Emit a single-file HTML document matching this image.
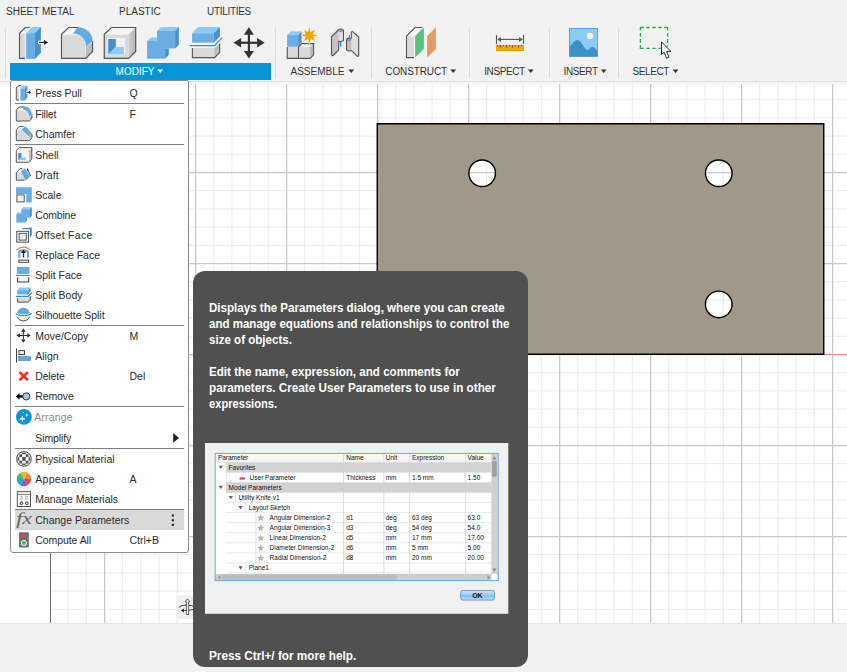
<!DOCTYPE html>
<html>
<head>
<meta charset="utf-8">
<title>Fusion 360 - Modify menu</title>
<style>
html,body{margin:0;padding:0;}
body{width:847px;height:672px;overflow:hidden;background:#f2f2f2;font-family:"Liberation Sans",sans-serif;font-size:11px;color:#2b2b2b;position:relative;}
.abs{position:absolute;}
#toolbar{left:0;top:0;width:847px;height:81px;background:#f2f2f2;border-bottom:1px solid #e0e0e0;}
.tab{position:absolute;top:5px;font-size:10px;color:#333;white-space:nowrap;line-height:13px;}
.vsep{position:absolute;top:27px;width:1px;height:50.5px;background:#dcdcdc;}
.glabel{position:absolute;top:65px;font-size:10px;color:#333;white-space:nowrap;line-height:13px;}
.dd{position:absolute;top:69.4px;width:5.8px;height:3.5px;background:#333;clip-path:polygon(0 0,100% 0,50% 100%);}
#modbar{left:10px;top:63px;width:261px;height:17px;background:#0696d7;}
#canvas{left:0;top:82px;width:847px;height:541px;background:#fff;overflow:hidden;}
#menu{left:10px;top:80px;width:177px;height:471px;background:#fff;border:1px solid #8c8c8c;border-radius:2px 2px 3px 3px;}
.mi{position:absolute;left:24.25px;margin-top:1px;font-size:10.5px;line-height:13px;color:#2b2b2b;white-space:nowrap;letter-spacing:0;}
.sc{position:absolute;left:118.5px;margin-top:1px;font-size:10.5px;line-height:13px;color:#2b2b2b;white-space:nowrap;}
.msep{position:absolute;left:4px;width:169px;height:1px;background:#7f7f7f;}
#tip{left:193px;top:271px;width:335px;height:396px;background:#505050;border-radius:12px;}
.tt{position:absolute;left:16.1px;color:#fff;font-weight:bold;font-size:12.5px;line-height:16px;white-space:nowrap;transform-origin:0 0;transform:scaleX(0.92);}
</style>
</head>
<body>
<!-- TOOLBAR -->
<div id="toolbar" class="abs">
  <div class="tab" style="left:6px">SHEET METAL</div>
  <div class="tab" style="left:119px">PLASTIC</div>
  <div class="tab" style="left:207px;letter-spacing:-0.3px">UTILITIES</div>
  <div class="vsep" style="left:5px"></div>
  <div class="vsep" style="left:275px"></div>
  <div class="vsep" style="left:371px"></div>
  <div class="vsep" style="left:469px"></div>
  <div class="vsep" style="left:549px"></div>
  <div class="vsep" style="left:618px"></div>
  <div id="modbar" class="abs"></div>
  <div class="glabel" style="left:115.6px;color:#fff">MODIFY</div><i class="dd" style="left:157.3px;background:#fff"></i>
  <div class="glabel" style="left:290.5px">ASSEMBLE</div><i class="dd" style="left:348.4px"></i>
  <div class="glabel" style="left:385.3px;letter-spacing:-0.12px">CONSTRUCT</div><i class="dd" style="left:450.3px"></i>
  <div class="glabel" style="left:484.2px;letter-spacing:-0.4px">INSPECT</div><i class="dd" style="left:527.9px"></i>
  <div class="glabel" style="left:563.5px;letter-spacing:-0.38px">INSERT</div><i class="dd" style="left:600.8px"></i>
  <div class="glabel" style="left:632.4px;letter-spacing:-0.37px">SELECT</div><i class="dd" style="left:672.7px"></i>
  <svg class="abs" style="left:0;top:0" width="847" height="82" viewBox="0 0 847 82">
    <defs>
      <linearGradient id="gr" x1="0" y1="0" x2="1" y2="0"><stop offset="0" stop-color="#cfcfcf"/><stop offset="1" stop-color="#b5b5b5"/></linearGradient>
      <!-- press pull 32px, origin at (14,22) -->
      <g id="ic-press">
        <path d="M25.2 27.6 L19.7 33.3 V58.2 H25.2 V33.3 L29.9 27.6 Z" fill="#f6f6f6"/>
        <rect x="20" y="33.5" width="5.2" height="24.6" fill="#dadada"/>
        <path d="M29.9 27.5 H25.25 L19.5 33.25 V58.4 H24.9" fill="none" stroke="#555" stroke-width="1.1"/>
        <path d="M25.6 33 L31.8 26.6 H41.4 V52.8 L35.1 59.4 H25.6 Z" fill="#fbf3ee"/>
        <path d="M26.2 33.25 L32.1 27.1 H40.9 L34.9 33.25 Z" fill="#8ccbf8"/>
        <rect x="26.2" y="33.25" width="8.7" height="25.65" fill="#6aade4"/>
        <path d="M34.9 33.25 L40.9 27.1 V52.6 L34.9 58.9 Z" fill="#4592cf"/>
        <rect x="38" y="40.6" width="7" height="3.6" fill="#fbf5f0"/>
        <path d="M39 42.4 H45.4" stroke="#222" stroke-width="1.2"/>
        <path d="M44 40.1 L48.2 42.4 L44 44.7 Z" fill="#222"/>
      </g>
      <g id="ic-fillet">
        <path d="M61.5 34.5 L68.5 27.5 H77.9 L72.9 33.6 Z" fill="#f8f8f8"/>
        <path d="M62 35 H74.75 A10.6 11.9 0 0 1 85.2 47 V58 H62 Z" fill="#dadada"/>
        <path d="M86 47.3 L92.6 42 V51.4 L85.7 58 Z" fill="#bcbcbc"/>
        <path d="M77.9 27.3 A14.7 13.5 0 0 1 92.6 40.75 L86 47 A13.1 13.4 0 0 0 72.9 33.6 Z" fill="#62abe3"/>
        <path d="M77.9 27.5 H68.5 L61.5 34.5 V58.4 H85.7 L92.6 51.4 V41" fill="none" stroke="#555" stroke-width="1.1"/>
      </g>
      <g id="ic-shell">
        <path d="M104.25 34.5 L111.4 27.5 H135.7 L128.6 34.8 Z" fill="#f3f3f3"/>
        <rect x="104.25" y="34.8" width="24.2" height="23.6" fill="#d8d8d8"/>
        <path d="M128.4 34.8 L135.7 27.5 V51.4 L128.6 58.4 Z" fill="url(#gr)"/>
        <rect x="107.1" y="37.9" width="18.1" height="17.2" fill="#f1f1f1"/>
        <path d="M108.2 39 H115.9 V47 L108.2 54.6 Z" fill="#4592cf"/>
        <path d="M115.9 47 H123.9 V54.6 H108.2 Z" fill="#8ccbf8"/>
        <path d="M104.25 34.5 L111.4 27.5 H135.7 V51.4 L128.6 58.4 H104.25 Z" fill="none" stroke="#555" stroke-width="1.2"/>
      </g>
      <g id="ic-combine">
        <path d="M146.6 41 L150.8 36.7 H156.6 V31 L160.8 26.6 H179.3 V45 L175.3 49.1 H169.3 V55 L165.3 59.25 H146.6 Z" fill="#fbf3ee"/>
        <path d="M147.1 41.1 H157.1 V31.1 H175.1 V48.6 H165.1 V58.75 H147.1 Z" fill="#6aade4"/>
        <path d="M157.1 31.1 L161 27.1 H178.8 L175.1 31.1 Z" fill="#8ccbf8"/>
        <path d="M147.1 41.1 L151 37.2 H157.1 V41.1 Z" fill="#8ccbf8"/>
        <path d="M175.1 31.1 L178.8 27.1 V44.8 L175.1 48.6 Z" fill="#4592cf"/>
        <path d="M165.1 48.6 H168.8 V54.8 L165.1 58.75 Z" fill="#4592cf"/>
      </g>
      <g id="ic-splitbody">
        <path d="M191.6 33 L197.9 26.6 H220.4 V36.7 L214 43.1 H191.6 Z" fill="#fbf3ee"/>
        <path d="M192.1 33.25 L198.1 27.1 H219.9 L213.7 33.25 Z" fill="#8ccbf8"/>
        <rect x="192.1" y="33.25" width="21.6" height="9.35" fill="#6aade4"/>
        <path d="M213.7 33.25 L219.9 27.1 V36.5 L213.7 42.6 Z" fill="#4592cf"/>
        <rect x="192.4" y="47.9" width="21.9" height="9.7" fill="#dadada"/>
        <path d="M214.3 47.9 L219.6 43.25 V52.6 L214.3 57.6 Z" fill="#bcbcbc"/>
        <path d="M192.4 47.9 V57.6 H214.6 L219.6 52.6 V43.5" fill="none" stroke="#555" stroke-width="1.1"/>
        <path d="M189.9 45.6 H214.6 L221.9 37.9" fill="none" stroke="#fcf6f1" stroke-width="3.6"/>
        <path d="M189.9 45.6 H214.6 L221.9 37.9" fill="none" stroke="#2b8ce6" stroke-width="1.2"/>
      </g>
      <g id="ic-move" fill="#333">
        <rect x="247.8" y="33" width="2.2" height="20"/>
        <rect x="239" y="41.65" width="20" height="2.2"/>
        <path d="M248.9 27.3 L253.9 34.8 H243.9 Z"/>
        <path d="M248.9 58.4 L253.9 51.1 H243.9 Z"/>
        <path d="M233.5 42.75 L241.1 38.1 V47.6 Z"/>
        <path d="M264.6 42.75 L257.1 38.1 V47.6 Z"/>
      </g>
    </defs>
    <use href="#ic-press"/><use href="#ic-fillet"/><use href="#ic-shell"/><use href="#ic-combine"/><use href="#ic-splitbody"/><use href="#ic-move"/>
    <!-- new component -->
    <g>
      <path d="M286.6 35 L290.8 30.75 H302.1 V42.8 L298.4 47 H286.6 Z" fill="#fbf3ee"/>
      <rect x="287.25" y="47" width="11.2" height="11.3" fill="#dadada"/>
      <rect x="298.6" y="47" width="11.5" height="11.3" fill="#dadada"/>
      <path d="M298.6 47 L302 43.6 H313.5 L310.1 47 Z" fill="#f6f6f6"/>
      <path d="M310.1 47 L313.5 43.6 V54.8 L310.1 58.25 Z" fill="#bcbcbc"/>
      <path d="M287.25 47 V58.4 H310.1 L313.6 54.8 V43.6 H302 L298.5 47 V58.4" fill="none" stroke="#555" stroke-width="1.1"/>
      <rect x="287.1" y="35.1" width="11.1" height="11.6" fill="#6aade4"/>
      <path d="M287.1 35.1 L291 31.25 H301.6 L298.2 35.1 Z" fill="#8ccbf8"/>
      <path d="M298.2 35.1 L301.6 31.4 V42.6 L298.2 46.7 Z" fill="#4592cf"/>
      <path id="star" d="M309.4 26.9 L310.6 31.9 L314.9 29.9 L312.9 34.2 L317.9 35.4 L312.9 36.6 L314.9 40.9 L310.6 38.9 L309.4 43.9 L308.2 38.9 L303.9 40.9 L305.9 36.6 L300.9 35.4 L305.9 34.2 L303.9 29.9 L308.2 31.9 Z" fill="#f6a500" stroke="#f4f0ea" stroke-width="0.8" paint-order="stroke"/>
    </g>
    <!-- joint -->
    <g stroke-linejoin="round">
      <defs><linearGradient id="cyl" x1="0" y1="0" x2="1" y2="0"><stop offset="0" stop-color="#c8c8c8"/><stop offset="0.5" stop-color="#e6e6e6"/><stop offset="1" stop-color="#d2d2d2"/></linearGradient></defs>
      <path d="M331.5 36.7 L338.4 30 V50.4 L332.75 55.75 L331.5 55.1 Z" fill="#c3c3c3"/>
      <path d="M338.3 30.2 C338.6 28.7 343.5 28.6 343.5 30.75 V40 C343.5 41.3 340.5 41.7 338.7 41.4 Z" fill="url(#cyl)"/>
      <ellipse cx="340.9" cy="30.7" rx="2" ry="0.9" fill="#c6c6c6" stroke="#6a6a6a" stroke-width="0.6"/>
      <path d="M331.5 36.7 L338.3 30 C339.3 28.6 343.5 28.5 343.5 30.75 V40 C343.5 41.3 340.8 41.7 338.7 41.4 V50.1 L332.75 55.75 L331.5 55.1 Z" fill="none" stroke="#555" stroke-width="1.1"/>
      <path d="M351.3 38.5 V32.3 L352.4 31.4 L358.7 37 V55.75 L357.4 56.4 L351.4 50.5 Z" fill="#dedede"/>
      <path d="M346.5 40 C346.5 38.3 350.2 38.1 351.4 38.7 V50.5 C350 51.2 346.5 51 346.5 49.6 Z" fill="#bfbfbf"/>
      <ellipse cx="349" cy="39.8" rx="2.1" ry="1" fill="#e2e2e2" stroke="#666" stroke-width="0.6"/>
      <path d="M351.3 38.6 V32.3 L352.4 31.4 L358.7 37 V55.75 L357.4 56.4 L351.5 50.6 C350 51.2 346.5 51 346.5 49.6 V40 C346.5 38.2 350 38 351.3 38.6" fill="none" stroke="#555" stroke-width="1.1"/>
      <path d="M340.6 42 V46.7 M349.3 35.1 V40.4" stroke="#1e90ff" stroke-width="1.3" fill="none"/>
    </g>
    <!-- construct -->
    <g>
      <path d="M415.1 27.6 L406.8 36.1 V57.4 H414 V36.1 L422 27.6 Z" fill="#f7f7f7"/>
      <rect x="407.1" y="36.4" width="6.9" height="20.9" fill="#dadada"/>
      <path d="M422.1 27.5 H415.1 L406.5 36.1 V57.6 H414" fill="none" stroke="#555" stroke-width="1.1"/>
      <path d="M415.1 36.1 L423.9 27.3 V48.9 L415.1 57.6 Z" fill="#57c47e" stroke="#f4faf6" stroke-width="0.8" paint-order="stroke"/>
      <path d="M427.1 36.1 L435.9 27.3 V48.9 L427.1 57.6 Z" fill="#e59a62" stroke="#f6f2ee" stroke-width="0.8" paint-order="stroke"/>
    </g>
    <!-- inspect -->
    <g>
      <rect x="495.4" y="44.5" width="29.1" height="6.9" fill="#f4f6fb"/>
      <rect x="495.9" y="45" width="28.1" height="5.9" fill="#f7a700"/>
      <rect x="495.9" y="50" width="28.1" height="0.9" fill="#e89800"/>
      <path d="M497.4 45 V46.4 M503.5 45 V46.4 M509.5 45 V46.4 M515.4 45 V46.4 M521.5 45 V46.4 M500.4 45 V47.75 M506.5 45 V47.75 M512.4 45 V47.75 M518.5 45 V47.75" stroke="#5a5040" stroke-width="0.9"/>
      <path d="M496.5 35 V43.9 M523.5 35 V43.9" stroke="#555" stroke-width="1.1"/>
      <path d="M499 39.4 H521" stroke="#555" stroke-width="1.1"/>
      <path d="M497.4 39.4 L500.9 37 V41.9 Z M522.75 39.4 L519.1 37 V41.9 Z" fill="#555"/>
    </g>
    <!-- insert -->
    <g>
      <rect x="568.4" y="27.4" width="30.2" height="30" fill="#faf4f0"/>
      <rect x="569.4" y="28.4" width="28.2" height="28" fill="#8ccbf8" stroke="#2f8ad2" stroke-width="0.7"/>
      <path d="M569.6 47 C573 43 575 40.1 577.7 40.1 C581.5 40.1 584 50.1 587.7 50.1 C589.5 50.1 590.5 46.7 592.4 46.7 C594.5 46.7 596 49.5 597.4 51.4 V56.2 H569.6 Z" fill="#3f8fca"/>
      <circle cx="590" cy="35.9" r="3.1" fill="#ffffc4"/>
    </g>
    <!-- select -->
    <g>
      <g fill="none" stroke="#1dae4c" stroke-width="1.3">
        <path d="M640.4 27.5 H667.6" stroke-dasharray="3.4 2.55"/>
        <path d="M640.4 48.4 H660.5" stroke-dasharray="3.4 2.55"/>
        <path d="M640.4 26.9 V49" stroke-dasharray="3.7 2.4"/>
        <path d="M667.6 26.9 V46.5" stroke-dasharray="3.7 2.4"/>
      </g>
      <path d="M661.5 41.9 V54.5 L664.2 52.2 L666.5 58.25 L669 57.3 L666.6 51.4 H670.9 Z" fill="#fff" stroke="#222" stroke-width="1" stroke-linejoin="miter"/>
    </g>
  </svg>
</div>

<!-- CANVAS -->
<div id="canvas" class="abs">
<svg width="847" height="541" viewBox="0 82 847 541" style="position:absolute;left:0;top:0">
  <defs>
    <pattern id="minor" x="377" y="354" width="18.2" height="18.2" patternUnits="userSpaceOnUse">
      <path d="M0.5 0V18.2M0 0.5H18.2" stroke="#eaeaea" stroke-width="1" fill="none"/>
    </pattern>
    <pattern id="major" x="377" y="354" width="91" height="91" patternUnits="userSpaceOnUse">
      <path d="M0.65 0V91M0 0.7H91" stroke="#c9c9c9" stroke-width="1.3" fill="none"/>
    </pattern>
  </defs>
  <rect x="50" y="82" width="797" height="541" fill="url(#minor)"/>
  <rect x="50" y="82" width="797" height="541" fill="url(#major)"/>
  <rect x="0" y="82" width="847" height="2" fill="#f4f4f4"/>
  <rect x="0" y="81" width="847" height="1" fill="#dedede"/>
  <rect x="50" y="84" width="1" height="539" fill="#6e6e6e"/>

  <rect x="377" y="84" width="1" height="40" fill="#7dfa7d"/>
  <rect x="824" y="354" width="23" height="1" fill="#ff8080"/>
  <path d="M377.25 123.75 H823.75 V354.25 H377.25 Z M468.85 173.25 a13.30 13.30 0 1 0 26.60 0 a13.30 13.30 0 1 0 -26.60 0 Z M705.45 173.25 a13.30 13.30 0 1 0 26.60 0 a13.30 13.30 0 1 0 -26.60 0 Z M705.45 304.45 a13.30 13.30 0 1 0 26.60 0 a13.30 13.30 0 1 0 -26.60 0 Z" fill="#a09888" fill-rule="evenodd" stroke="#000" stroke-width="1.4"/>
  <rect x="176.4" y="595.1" width="30" height="24.1" rx="1.5" fill="#f0f0f0"/>
  <path d="M179.2 607.6 C179.5 604.5 192 604.5 195 607 C197 609.5 190 610.4 183.5 610.4" fill="none" stroke="#222" stroke-width="0.9"/>
  <path d="M180.9 610.4 L183.8 608.4 V612.5 Z" fill="#111"/>
  <path d="M187.45 598.9 L190 601.7 H188.6 V614.5 H186.4 V601.7 H185 Z" fill="#fff" stroke="#334" stroke-width="0.8"/>
</svg>
</div>

<div class="abs" style="left:0;top:623px;width:847px;height:1px;background:#e6e6e6"></div>
<!-- MENU -->
<div id="menu" class="abs"><div class="abs" style="left:0;top:1px">
  <div class="abs" style="left:4px;top:428px;width:169px;height:20px;background:#d9d9d9"></div>
  <div class="msep" style="top:21px"></div>
  <div class="msep" style="top:62px"></div>
  <div class="msep" style="top:243px"></div>
  <div class="msep" style="top:324px"></div>
  <div class="msep" style="top:366px"></div>
  <div class="msep" style="top:427px"></div>
  <div class="mi" style="top:4px;color:#2b2b2b;letter-spacing:-0.08px">Press Pull</div>
  <div class="sc" style="top:4px">Q</div>
  <div class="mi" style="top:25px;color:#2b2b2b;letter-spacing:-0.2px">Fillet</div>
  <div class="sc" style="top:25px">F</div>
  <div class="mi" style="top:45px;color:#2b2b2b">Chamfer</div>
  <div class="mi" style="top:66px;color:#2b2b2b">Shell</div>
  <div class="mi" style="top:86px;color:#2b2b2b;letter-spacing:0.19px">Draft</div>
  <div class="mi" style="top:106px;color:#2b2b2b">Scale</div>
  <div class="mi" style="top:126px;color:#2b2b2b;letter-spacing:-0.2px">Combine</div>
  <div class="mi" style="top:146px;color:#2b2b2b;letter-spacing:0.3px">Offset Face</div>
  <div class="mi" style="top:166px;color:#2b2b2b">Replace Face</div>
  <div class="mi" style="top:186px;color:#2b2b2b">Split Face</div>
  <div class="mi" style="top:206px;color:#2b2b2b">Split Body</div>
  <div class="mi" style="top:226px;color:#2b2b2b;letter-spacing:-0.05px">Silhouette Split</div>
  <div class="mi" style="top:247px;color:#2b2b2b">Move/Copy</div>
  <div class="sc" style="top:247px">M</div>
  <div class="mi" style="top:267px;color:#2b2b2b">Align</div>
  <div class="mi" style="top:287px;color:#2b2b2b;letter-spacing:-0.15px">Delete</div>
  <div class="sc" style="top:287px">Del</div>
  <div class="mi" style="top:307px;color:#2b2b2b;letter-spacing:-0.12px">Remove</div>
  <div class="mi" style="top:328px;color:#8a8a8a;letter-spacing:0.17px;margin-left:-1px">Arrange</div>
  <div class="mi" style="top:349px;color:#2b2b2b;letter-spacing:-0.1px">Simplify</div>
  <div class="mi" style="top:370px;color:#2b2b2b">Physical Material</div>
  <div class="mi" style="top:390px;color:#2b2b2b;letter-spacing:0.28px">Appearance</div>
  <div class="sc" style="top:390px">A</div>
  <div class="mi" style="top:410px;color:#2b2b2b;letter-spacing:-0.05px">Manage Materials</div>
  <div class="mi" style="top:431px;color:#2b2b2b">Change Parameters</div>
  <div class="mi" style="top:451px;color:#2b2b2b;letter-spacing:-0.07px">Compute All</div>
  <div class="sc" style="top:451px">Ctrl+B</div>
  <svg class="abs" style="left:-11px;top:-82px" width="200" height="560" viewBox="0 0 200 560">
    <defs>
      <clipPath id="cpm"><circle cx="23.95" cy="458.9" r="7.5"/></clipPath>
      <pattern id="chk" x="22" y="457.1" width="7.6" height="7.6" patternUnits="userSpaceOnUse">
        <rect x="0" y="0" width="3.8" height="3.8" fill="#555"/><rect x="3.8" y="3.8" width="3.8" height="3.8" fill="#555"/>
      </pattern>
    </defs>
    <!-- press pull -->
    <rect x="16.6" y="88.7" width="2.6" height="11.2" fill="#dadada"/>
    <path d="M21 85.6 H18.9 Q16.3 86 16.3 88.9 V100.1 H18.9" fill="none" stroke="#555" stroke-width="1"/>
    <path d="M20.4 88.7 L22.5 85.6 H27.4 L24.9 88.7 Z" fill="#8ccbf8"/>
    <rect x="20.4" y="88.7" width="4.5" height="11.9" fill="#6aade4"/>
    <path d="M24.9 88.7 L27.4 85.6 V97.2 L24.9 100.6 Z" fill="#4592cf"/>
    <rect x="26" y="90.7" width="3.6" height="3.2" fill="#fff"/>
    <path d="M26.5 92.3 H29.6" stroke="#222" stroke-width="1"/>
    <path d="M29 90.7 L31.3 92.3 L29 93.9 Z" fill="#222"/>
    <!-- fillet -->
    <path d="M16.3 110.1 L19.1 107 H23.9 L21 110.1 Z" fill="#f8f8f8"/>
    <path d="M16.6 110.3 H22 A7 6.5 0 0 1 29.3 116.5 V120.7 H16.6 Z" fill="#dadada"/>
    <path d="M29.3 116.8 L32 114.6 V118 L29.6 120.7 Z" fill="#bcbcbc"/>
    <path d="M23.9 106.3 A8.1 8.1 0 0 1 32 114.4 L29.1 116.3 A7 7 0 0 0 22.5 109.2 Z" fill="#62abe3"/>
    <path d="M23.9 107 H19.1 L16.3 110.1 V121 H29.6 L32 118 V114.6" fill="none" stroke="#555" stroke-width="1"/>
    <!-- chamfer -->
    <path d="M16.3 129.6 L19.1 126.6 H23.4 L21.5 129.6 Z" fill="#f8f8f8"/>
    <path d="M16.6 129.8 H21.5 L28.7 136.5 V140.3 H16.6 Z" fill="#dadada"/>
    <path d="M28.9 136.6 L32 133.8 V137.7 L29.6 140.4 Z" fill="#bcbcbc"/>
    <path d="M21.5 129.6 L25.3 126.3 L32 133.4 L28.7 136.3 Z" fill="#62abe3"/>
    <path d="M23.6 126.6 H19.1 L16.3 129.6 V140.6 H29.6 L32 137.7 V133.8" fill="none" stroke="#555" stroke-width="1"/>
    <!-- shell -->
    <path d="M16.3 150.7 L19.1 147.6 H31.8 L28.8 150.7 Z" fill="#f3f3f3"/>
    <rect x="16.3" y="150.7" width="12.5" height="11.6" fill="#f4f4f4"/>
    <path d="M28.8 150.7 L31.8 147.6 V159.2 L29.1 162.3 Z" fill="#c2c2c2"/>
    <path d="M18.2 153 H21.5 V157.5 L18.2 160.2 Z" fill="#4592cf"/>
    <path d="M21.5 157.5 H25.8 V160.2 H18.2 Z" fill="#8ccbf8"/>
    <path d="M16.3 150.7 L19.1 147.6 H31.8 V159.2 L29.1 162.3 H16.3 Z" fill="none" stroke="#555" stroke-width="1"/>
    <!-- draft -->
    <path d="M16.3 172.6 L20 168.7 H22.6 L21 171.6 L25.8 180.2 H16.3 Z" fill="#dadada"/>
    <path d="M16.3 172.6 L20 168.7 H22.6 L19.6 172.6 Z" fill="#f4f4f4"/>
    <path d="M22.6 168.7 H20 L16.3 172.6 V180.2 H24.4" fill="none" stroke="#555" stroke-width="1"/>
    <path d="M21 171.6 L24.9 168.3 L30.1 176.4 L25.8 180.7 Z" fill="#5fa8e0"/>
    <path d="M27.4 169 L30.6 175.9" stroke="#222" stroke-width="0.9"/>
    <path d="M27 168 L28.9 170.3 L26.9 171 Z" fill="#222"/>
    <!-- scale -->
    <path d="M16 187.3 H31.8 V202.6 H26.3 V194 H16 Z" fill="#6aade4"/>
    <rect x="16.9" y="194.9" width="7.3" height="7" fill="#f0f0f0" stroke="#555" stroke-width="1"/>
    <!-- combine -->
    <use href="#ic-combine" transform="translate(-55.63 194.21) scale(0.489 0.483)"/>
    <!-- offset face -->
    <path d="M22 228.2 L31.8 227.5 V235.3 L30 237.2 V229.2 H22 Z" fill="#3f8cc8"/>
    <rect x="16.8" y="231.3" width="11.8" height="10.8" fill="#fff" stroke="#444" stroke-width="0.95"/>
    <rect x="19.1" y="233.3" width="7.2" height="6.8" fill="#ececec" stroke="#444" stroke-width="0.9"/>
    <!-- replace face -->
    <path d="M16.3 250.2 Q23.4 244 30.6 250.2" fill="none" stroke="#f08030" stroke-width="1.1"/>
    <path d="M18.2 257.8 V252.2 Q18.2 249.2 23.6 249.2 Q29.1 249.2 29.1 252.2 V257.8 Z" fill="#5fa8e0"/>
    <rect x="20.3" y="252.2" width="6.6" height="5.6" fill="#fff"/>
    <path d="M23.5 252 V257.4" stroke="#111" stroke-width="1.3"/>
    <path d="M23.5 249.8 L25.9 253 H21.1 Z" fill="#111"/>
    <rect x="18.9" y="260.1" width="9.7" height="2.2" fill="#fff" stroke="#444" stroke-width="1"/>
    <!-- split face -->
    <rect x="17.2" y="267.3" width="11.8" height="6.2" fill="#6aade4" stroke="#4a94d4" stroke-width="0.6"/>
    <path d="M17.6 277.3 V282 H28.7 V277.3" fill="#f0f0f0" stroke="#444" stroke-width="1.1"/>
    <path d="M15.8 275.4 H30.1" stroke="#2b8ce6" stroke-width="1.1"/>
    <!-- split body -->
    <path d="M17.2 290.2 L19.6 287.6 H30.6 L28.2 290.2 Z" fill="#8ccbf8"/>
    <rect x="17.2" y="290.2" width="11" height="4.3" fill="#6aade4"/>
    <path d="M28.2 290.2 L30.6 287.6 V292.1 L28.2 294.5 Z" fill="#4592cf"/>
    <rect x="17.2" y="298.1" width="11" height="4" fill="#dadada"/>
    <path d="M28.2 298.1 L30.6 295.9 V300 L28.2 302.1 Z" fill="#bcbcbc"/>
    <path d="M17.5 298.1 V302.1 H28.2 L30.6 300 V296" fill="none" stroke="#555" stroke-width="1"/>
    <path d="M15.8 296.4 H28.2 L31.8 292.6" fill="none" stroke="#fff" stroke-width="2.6"/>
    <path d="M15.8 296.4 H28.2 L31.8 292.6" fill="none" stroke="#2b8ce6" stroke-width="1.1"/>
    <!-- silhouette split -->
    <circle cx="23.4" cy="313.8" r="6.5" fill="#f0f0f0"/>
    <path d="M16.9 314.5 A6.5 6.7 0 0 1 29.9 314.5 Q23.4 318 16.9 314.5 Z" fill="#5fa8e0"/>
    <path d="M17.3 316.6 A6.5 6.5 0 0 0 29.5 316.6" fill="none" stroke="#444" stroke-width="1"/>
    <path d="M15.8 313.4 A8.2 3 0 0 0 31.6 313.4" fill="none" stroke="#fff" stroke-width="2.6"/>
    <path d="M15.8 313.4 A8.2 3 0 0 0 31.6 313.4" fill="none" stroke="#2b8ce6" stroke-width="1.1"/>
    <!-- move -->
    <use href="#ic-move" transform="translate(-92.34 315.62) scale(0.465)"/>
    <!-- align -->
    <path d="M16.5 348.3 V362.6" stroke="#444" stroke-width="1"/>
    <rect x="18.9" y="350.6" width="5.6" height="3.9" fill="#f0f0f0" stroke="#444" stroke-width="1"/>
    <rect x="18.4" y="356.4" width="12.2" height="4.2" fill="#5fa8e0" stroke="#3f8cc8" stroke-width="0.6"/>
    <!-- delete -->
    <path d="M19.4 372 L28 380.2 M28 372 L19.4 380.2" stroke="#ff2b2b" stroke-width="2.6" fill="none"/>
    <!-- remove -->
    <rect x="19" y="395.3" width="4" height="2.3" fill="#000"/>
    <path d="M15.9 396.4 L19.5 393 V399.8 Z" fill="#000"/>
    <circle cx="26.3" cy="396.4" r="3.6" fill="#a8c4e0" stroke="#334" stroke-width="1"/>
    <!-- arrange -->
    <circle cx="23.9" cy="416.9" r="7.9" fill="#0a96dc"/>
    <path d="M22.4 416.2 V421.4 M19.8 418.8 H25" stroke="#fff" stroke-width="1.3"/>
    <path d="M26.8 413.1 L27.3 414.5 L28.7 415 L27.3 415.5 L26.8 416.9 L26.3 415.5 L24.9 415 L26.3 414.5 Z" fill="#fff"/>
    <circle cx="23.4" cy="412.6" r="0.65" fill="#fff"/>
    <!-- physical material -->
    <circle cx="23.95" cy="458.9" r="7.5" fill="#fff"/>
    <path d="M16.25 451.20H17.65V452.60H16.25ZM16.25 454.30H17.65V457.10H16.25ZM16.25 460.70H17.65V463.50H16.25ZM16.25 465.20H17.65V466.60H16.25ZM17.65 452.60H19.35V454.30H17.65ZM17.65 457.10H19.35V460.70H17.65ZM17.65 463.50H19.35V465.20H17.65ZM19.35 451.20H22.15V452.60H19.35ZM19.35 454.30H22.15V457.10H19.35ZM19.35 460.70H22.15V463.50H19.35ZM19.35 465.20H22.15V466.60H19.35ZM22.15 452.60H25.75V454.30H22.15ZM22.15 457.10H25.75V460.70H22.15ZM22.15 463.50H25.75V465.20H22.15ZM25.75 451.20H28.55V452.60H25.75ZM25.75 454.30H28.55V457.10H25.75ZM25.75 460.70H28.55V463.50H25.75ZM25.75 465.20H28.55V466.60H25.75ZM28.55 452.60H30.25V454.30H28.55ZM28.55 457.10H30.25V460.70H28.55ZM28.55 463.50H30.25V465.20H28.55ZM30.25 451.20H31.65V452.60H30.25ZM30.25 454.30H31.65V457.10H30.25ZM30.25 460.70H31.65V463.50H30.25ZM30.25 465.20H31.65V466.60H30.25Z" fill="#555" clip-path="url(#cpm)"/>
    <circle cx="23.95" cy="458.9" r="7.4" fill="none" stroke="#555" stroke-width="0.9"/>
    <!-- appearance -->
    <g transform="translate(23.9 479)">
      <path d="M0 0 L-3.55 -6.15 A7.1 7.1 0 0 1 3.55 -6.15 Z" fill="#fbb030"/>
      <path d="M0 0 L3.55 -6.15 A7.1 7.1 0 0 1 7.1 0 Z" fill="#f5842a"/>
      <path d="M0 0 L7.1 0 A7.1 7.1 0 0 1 3.55 6.15 Z" fill="#e04848"/>
      <path d="M0 0 L3.55 6.15 A7.1 7.1 0 0 1 -3.55 6.15 Z" fill="#8a50f0"/>
      <path d="M0 0 L-3.55 6.15 A7.1 7.1 0 0 1 -7.1 0 Z" fill="#18a8e0"/>
      <path d="M0 0 L-7.1 0 A7.1 7.1 0 0 1 -3.55 -6.15 Z" fill="#3cb878"/>
    </g>
    <!-- manage materials -->
    <rect x="17.3" y="491.6" width="13.2" height="14.9" fill="#fff" stroke="#555" stroke-width="1"/>
    <rect x="17.8" y="492.1" width="12.2" height="2.2" fill="#e6e8ee"/>
    <path d="M17.3 494.6 H30.5" stroke="#666" stroke-width="0.8"/>
    <path d="M20.1 496.8 H23 M24.9 496.8 H27.7 M20.1 498.8 H23 M24.9 498.8 H27.7" stroke="#888" stroke-width="0.8"/>
    <circle cx="21.5" cy="503.2" r="1.4" fill="#e8c060" stroke="#333" stroke-width="0.9"/>
    <circle cx="26.8" cy="503.2" r="1.4" fill="#e4e4e4" stroke="#333" stroke-width="0.9"/>
    <!-- fx -->
    <text x="16.2" y="524.1" font-family="Liberation Serif" font-style="italic" font-size="16.5" fill="#606060" textLength="15.8" lengthAdjust="spacingAndGlyphs">fx</text>
    <!-- compute all -->
    <rect x="19.1" y="532.3" width="9.7" height="15.3" rx="1.2" fill="#6e6e6e"/>
    <circle cx="23.9" cy="535.9" r="1.9" fill="#f04858"/>
    <circle cx="23.9" cy="542.9" r="2.9" fill="#fff"/>
    <circle cx="23.9" cy="542.9" r="2.1" fill="#35c060"/>
    <!-- submenu arrow, dots -->
    <path d="M173.2 433.1 L179 438 L173.2 442.8 Z" fill="#222"/>
    <rect x="171.8" y="514.5" width="2" height="2" fill="#111"/><rect x="171.8" y="519.2" width="2" height="2" fill="#111"/><rect x="171.8" y="523.8" width="2" height="2" fill="#111"/>
  </svg>
</div></div>

<!-- TOOLTIP -->
<div id="tip" class="abs">
  <div class="tt" style="top:29.2px;transform:scaleX(0.9255)">Displays the Parameters dialog, where you can create</div>
  <div class="tt" style="top:45.1px;transform:scaleX(0.9220)">and manage equations and relationships to control the</div>
  <div class="tt" style="top:60.6px;transform:scaleX(0.9250)">size of objects.</div>
  <div class="tt" style="top:93.2px;transform:scaleX(0.9285)">Edit the name, expression, and comments for</div>
  <div class="tt" style="top:109.1px;transform:scaleX(0.9386)">parameters. Create User Parameters to use in other</div>
  <div class="tt" style="top:124.6px;transform:scaleX(0.8903)">expressions.</div>
  <div class="tt" style="top:376.7px;transform:scaleX(0.9396)">Press Ctrl+/ for more help.</div>
  <svg class="abs" style="left:12px;top:172px" width="304" height="171" viewBox="205 443 304 171" font-family="Liberation Sans, sans-serif" font-size="6.5" fill="#111">
  <rect x="205" y="443" width="303.3" height="170.8" fill="#f0f0f0"/>
  <rect x="215.2" y="453.4" width="283.0" height="127.20000000000005" fill="#fff"/>
  <rect x="215.2" y="453.4" width="276.1" height="8.900000000000034" fill="#f6f6f6"/>
  <rect x="226.3" y="462.30" width="265.0" height="10.06" fill="#d2d2d2"/>
  <rect x="226.3" y="482.42" width="265.0" height="10.06" fill="#d2d2d2"/>
  <path d="M215.2 462.30H491.3" stroke="#dcdcdc" stroke-width="0.6"/>
  <path d="M226 472.36H491.3" stroke="#dcdcdc" stroke-width="0.6"/>
  <path d="M226 482.42H491.3" stroke="#dcdcdc" stroke-width="0.6"/>
  <path d="M226 492.48H491.3" stroke="#dcdcdc" stroke-width="0.6"/>
  <path d="M226 502.54H491.3" stroke="#dcdcdc" stroke-width="0.6"/>
  <path d="M226 512.60H491.3" stroke="#dcdcdc" stroke-width="0.6"/>
  <path d="M226 522.66H491.3" stroke="#dcdcdc" stroke-width="0.6"/>
  <path d="M226 532.72H491.3" stroke="#dcdcdc" stroke-width="0.6"/>
  <path d="M226 542.78H491.3" stroke="#dcdcdc" stroke-width="0.6"/>
  <path d="M226 552.84H491.3" stroke="#dcdcdc" stroke-width="0.6"/>
  <path d="M226 562.90H491.3" stroke="#dcdcdc" stroke-width="0.6"/>
  <path d="M226 572.96H491.3" stroke="#dcdcdc" stroke-width="0.6"/>
  <path d="M343.5 453.4V573.9" stroke="#d0d0d0" stroke-width="0.7"/>
  <path d="M383.9 453.4V573.9" stroke="#d0d0d0" stroke-width="0.7"/>
  <path d="M409.6 453.4V573.9" stroke="#d0d0d0" stroke-width="0.7"/>
  <path d="M465.6 453.4V573.9" stroke="#d0d0d0" stroke-width="0.7"/>
  <path d="M226.3 462.30V472.36" stroke="#d8d8d8" stroke-width="0.7"/>
  <path d="M226.3 472.36V482.42" stroke="#d8d8d8" stroke-width="0.7"/>
  <path d="M226.3 482.42V492.48" stroke="#d8d8d8" stroke-width="0.7"/>
  <path d="M235.7 492.48V502.54" stroke="#d8d8d8" stroke-width="0.7"/>
  <path d="M245.8 502.54V512.60" stroke="#d8d8d8" stroke-width="0.7"/>
  <path d="M255.8 512.60V522.66" stroke="#d8d8d8" stroke-width="0.7"/>
  <path d="M255.8 522.66V532.72" stroke="#d8d8d8" stroke-width="0.7"/>
  <path d="M255.8 532.72V542.78" stroke="#d8d8d8" stroke-width="0.7"/>
  <path d="M255.8 542.78V552.84" stroke="#d8d8d8" stroke-width="0.7"/>
  <path d="M255.8 552.84V562.90" stroke="#d8d8d8" stroke-width="0.7"/>
  <path d="M245.8 562.90V572.96" stroke="#d8d8d8" stroke-width="0.7"/>
  <text x="217.9" y="460.4">Parameter</text><text x="346.2" y="460.4">Name</text><text x="385.7" y="460.4">Unit</text><text x="412.0" y="460.4">Expression</text><text x="467.6" y="460.4">Value</text>
  <path d="M218.6 465.7h4.4l-2.2 3.4z" fill="#666"/><text x="228.6" y="469.8">Favorites</text>
  <rect x="239.5" y="477.6" width="5.6" height="2" rx="0.8" fill="#e03030"/>
  <text x="249.6" y="479.9">User Parameter</text><text x="346.2" y="479.9">Thickness</text><text x="385.7" y="479.9">mm</text><text x="412.0" y="479.9">1.5 mm</text><text x="467.6" y="479.9">1.50</text>
  <path d="M218.6 485.8h4.4l-2.2 3.4z" fill="#666"/><text x="228.6" y="489.9">Model Parameters</text>
  <path d="M228.6 495.9h4.4l-2.2 3.4z" fill="#666"/><text x="238.4" y="500.0">Utility Knife v1</text>
  <path d="M238.4 506.0h4.4l-2.2 3.4z" fill="#666"/><text x="248.7" y="510.1">Layout Sketch</text>
  <path d="M260.80 514.03L261.80 516.55L264.51 516.72L262.42 518.46L263.09 521.09L260.80 519.63L258.51 521.09L259.18 518.46L257.09 516.72L259.80 516.55Z" fill="#b4b4b4"/><text x="269.6" y="520.1">Angular Dimension-2</text><text x="346.2" y="520.1">d1</text><text x="385.7" y="520.1">deg</text><text x="412.0" y="520.1">63 deg</text><text x="467.6" y="520.1">63.0</text>
  <path d="M260.80 524.09L261.80 526.61L264.51 526.78L262.42 528.52L263.09 531.15L260.80 529.69L258.51 531.15L259.18 528.52L257.09 526.78L259.80 526.61Z" fill="#b4b4b4"/><text x="269.6" y="530.2">Angular Dimension-3</text><text x="346.2" y="530.2">d3</text><text x="385.7" y="530.2">deg</text><text x="412.0" y="530.2">54 deg</text><text x="467.6" y="530.2">54.0</text>
  <path d="M260.80 534.15L261.80 536.67L264.51 536.84L262.42 538.58L263.09 541.21L260.80 539.75L258.51 541.21L259.18 538.58L257.09 536.84L259.80 536.67Z" fill="#b4b4b4"/><text x="269.6" y="540.2">Linear Dimension-2</text><text x="346.2" y="540.2">d5</text><text x="385.7" y="540.2">mm</text><text x="412.0" y="540.2">17 mm</text><text x="467.6" y="540.2">17.00</text>
  <path d="M260.80 544.21L261.80 546.73L264.51 546.90L262.42 548.64L263.09 551.27L260.80 549.81L258.51 551.27L259.18 548.64L257.09 546.90L259.80 546.73Z" fill="#b4b4b4"/><text x="269.6" y="550.3">Diameter Dimension-2</text><text x="346.2" y="550.3">d6</text><text x="385.7" y="550.3">mm</text><text x="412.0" y="550.3">5 mm</text><text x="467.6" y="550.3">5.00</text>
  <path d="M260.80 554.27L261.80 556.79L264.51 556.96L262.42 558.70L263.09 561.33L260.80 559.87L258.51 561.33L259.18 558.70L257.09 556.96L259.80 556.79Z" fill="#b4b4b4"/><text x="269.6" y="560.4">Radial Dimension-2</text><text x="346.2" y="560.4">d8</text><text x="385.7" y="560.4">mm</text><text x="412.0" y="560.4">20 mm</text><text x="467.6" y="560.4">20.00</text>
  <path d="M238.4 566.3h4.4l-2.2 3.4z" fill="#666"/><text x="248.7" y="570.4">Plane1</text>
  <rect x="491.3" y="453.4" width="6.4" height="120.5" fill="#d0d0d0"/>
  <rect x="492" y="461" width="4.8" height="15.8" rx="1" fill="#a0a0a0"/>
  <path d="M492.3 459.5h4.2l-2.1-3.2z M492.3 568.5h4.2l-2.1 3.2z" fill="#8c8c8c"/>
  <rect x="215.2" y="573.9" width="283.0" height="6.5" fill="#cecece"/><rect x="491.4" y="574" width="6.3" height="6.2" fill="#fff"/>
  <rect x="222" y="574.4" width="175" height="5.4" rx="1" fill="#bcbcbc"/>
  <path d="M220.5 575h-0 l-3 2.4 3 2.4z M487.5 575l3 2.4 -3 2.4z" fill="#999"/>
  <rect x="215.2" y="453.4" width="283.0" height="127.20000000000005" fill="none" stroke="#6ea6e2" stroke-width="1"/>
  <defs><linearGradient id="okg" x1="0" y1="0" x2="0" y2="1"><stop offset="0" stop-color="#d2e7f9"/><stop offset="0.45" stop-color="#9ccdf5"/><stop offset="0.55" stop-color="#80bff2"/><stop offset="1" stop-color="#bcdef8"/></linearGradient></defs>
  <rect x="460.7" y="590.5" width="33.8" height="9.6" rx="2.2" fill="url(#okg)" stroke="#5b86b8" stroke-width="0.8"/>
  <text x="477.4" y="597.6" text-anchor="middle" font-weight="bold" font-size="7" fill="#111">OK</text>
  </svg>
</div>
</body>
</html>
